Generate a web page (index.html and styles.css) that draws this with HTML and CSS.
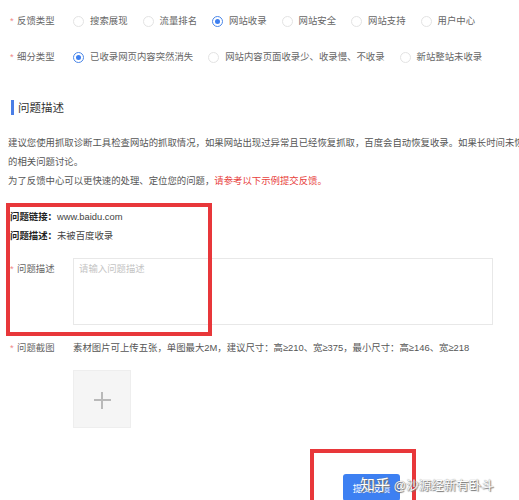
FILE: index.html
```html
<!DOCTYPE html>
<html lang="zh-CN">
<head>
  <meta charset="UTF-8">
  <title>反馈中心</title>
  <link rel="stylesheet" href="styles.css">
</head>
<body>
  <div class="page">

    <!-- 反馈类型 -->
    <div class="form-row">
      <div class="label"><i>*</i>反馈类型</div>
      <div class="field radios">
        <span class="radio"><b></b>搜索展现</span>
        <span class="radio"><b></b>流量排名</span>
        <span class="radio on"><b></b>网站收录</span>
        <span class="radio"><b></b>网站安全</span>
        <span class="radio"><b></b>网站支持</span>
        <span class="radio"><b></b>用户中心</span>
      </div>
    </div>
    <div class="form-row row-sub">
      <div class="label"><i>*</i>细分类型</div>
      <div class="field radios">
        <span class="radio on"><b></b>已收录网页内容突然消失</span>
        <span class="radio"><b></b>网站内容页面收录少、收录慢、不收录</span>
        <span class="radio"><b></b>新站整站未收录</span>
      </div>
    </div>

    <!-- 问题描述 -->
    <h2 class="title">问题描述</h2>
    <div class="tips">
      <p>建议您使用抓取诊断工具检查网站的抓取情况，如果网站出现过异常且已经恢复抓取，百度会自动恢复收录。如果长时间未恢复，请前往社区搜索</p>
      <p>的相关问题讨论。</p>
      <p>为了反馈中心可以更快速的处理、定位您的问题，<span class="red">请参考以下示例提交反馈。</span></p>
    </div>

    <div class="sample">
      <p><strong>问题链接：</strong>www.baidu.com</p>
      <p><strong>问题描述：</strong>未被百度收录</p>
    </div>

    <div class="form-row row-desc">
      <div class="label"><i>*</i>问题描述</div>
      <div class="field">
        <div class="textarea">请输入问题描述</div>
      </div>
    </div>

    <div class="form-row row-pic">
      <div class="label"><i>*</i>问题截图</div>
      <div class="field">素材图片可上传五张，单图最大2M，建议尺寸：高≥210、宽≥375，最小尺寸：高≥146、宽≥218</div>
    </div>
    <div class="upload"><span class="plus"></span></div>

    <button class="submit">提交反馈</button>

    <!-- 标注框 -->
    <div class="mark mark-sample"></div>
    <div class="mark mark-submit"></div>
    <div class="watermark"><span class="zh">知乎</span> @沙源经新有卧斗</div>
  </div>
</body>
</html>
```

FILE: styles.css
```css
* { box-sizing: border-box; }
html, body { margin: 0; background: #fff; overflow: hidden; }
body { font-family: "Liberation Sans", "Noto Sans CJK SC", sans-serif; font-size: 9.4px; color: #555; }
p { margin: 0; }

.page { position: relative; height: 500px; padding: 11px 0 0 8px; }

/* 表单行 */
.form-row { display: flex; line-height: 20px; }
.label { width: 65px; flex: none; color: #666; }
.label i { font-style: normal; color: #f08a8a; display: inline-block; width: 9px; padding-left: 2px; }
.field { flex: 1; white-space: nowrap; color: #555; }
.row-sub { margin-top: 16px; }

.radios { display: flex; }
.radio { display: flex; align-items: center; margin-right: 15px; color: #666; }
.radio b {
  width: 11px; height: 11px; border-radius: 50%;
  border: 1px solid #e3e3e3; margin-right: 6px; position: relative;
}
.radio.on b { border-color: #4a86e8; }
.radio.on b::after {
  content: ""; position: absolute; left: 2px; top: 2px;
  width: 5px; height: 5px; border-radius: 50%; background: #3d7ff0;
}

/* 标题 */
.title {
  margin: 33px 0 0 3px; font-size: 11.5px; font-weight: normal; color: #333;
  line-height: 16px; border-left: 3px solid #4a7ee6; padding-left: 4px; height: 15px;
}

.tips { margin-top: 18px; line-height: 19px; color: #555; white-space: nowrap; }
.tips .red { color: #e8413c; }

.sample { margin-top: 17px; line-height: 19px; color: #444; padding-left: 2px; }
.sample strong { color: #222; font-weight: bold; }

.row-desc { margin-top: 13px; }
.row-desc .label { padding-top: 1px; }
.textarea {
  width: 420px; height: 67px; border: 1px solid #e8e8e8;
  color: #c4c4c4; padding: 0 5px; line-height: 20px;
}

.row-pic { margin-top: 13px; }

.upload {
  margin: 12px 0 0 65px; width: 58px; height: 58px;
  background: #f5f5f5; border: 1px solid #eee; position: relative;
}
.plus::before, .plus::after { content: ""; position: absolute; background: #b9b9b9; }
.plus::before { left: 20px; top: 28px; width: 17px; height: 2px; }
.plus::after { left: 27px; top: 21px; width: 2px; height: 17px; }

.submit {
  display: block; margin: 46px 0 0 335px; width: 57px; height: 27px;
  background: #3d80f2; color: #fff; border: none; border-radius: 3px;
  font-family: inherit; font-size: 9.4px; padding: 0;
}

/* 标注 */
.mark { position: absolute; border: 4px solid #e8373a; }
.mark-sample { left: 6px; top: 203px; width: 206px; height: 133px; }
.mark-submit { left: 310px; top: 449px; width: 106px; height: 60px; }

.watermark {
  position: absolute; left: 360px; top: 473px; color: #fff; font-size: 12.5px;
  text-shadow: 0 0 1px #666, 1px 1px 1px #777; white-space: nowrap;
}
.watermark .zh { font-size: 15px; }
```
